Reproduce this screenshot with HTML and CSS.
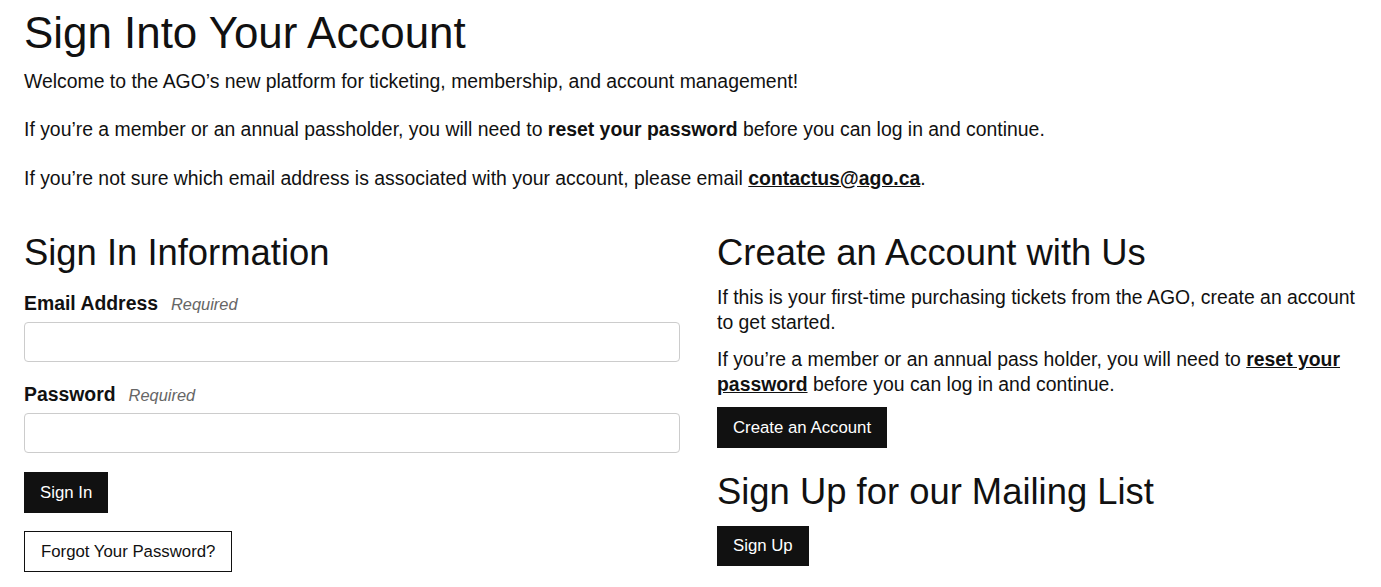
FILE: index.html
```html
<!DOCTYPE html>
<html lang="en">
<head>
<meta charset="utf-8">
<title>Sign Into Your Account</title>
<link rel="stylesheet" href="styles.css">
</head>
<body>
<main class="page">
  <h1 class="title">Sign Into Your Account</h1>
  <section class="intro">
    <p>Welcome to the AGO’s new platform for ticketing, membership, and account management!</p>
    <p>If you’re a member or an annual passholder, you will need to <strong>reset your password</strong> before you can log in and continue.</p>
    <p>If you’re not sure which email address is associated with your account, please email <a class="link" href="#">contactus@ago.ca</a>.</p>
  </section>
  <div class="columns">
    <section class="col">
      <h2 class="heading">Sign In Information</h2>
      <form class="form">
        <div class="field">
          <label class="label" for="email"><span class="label-text">Email Address</span><span class="req">Required</span></label>
          <input class="input" id="email" type="email">
        </div>
        <div class="field">
          <label class="label" for="pw"><span class="label-text">Password</span><span class="req">Required</span></label>
          <input class="input" id="pw" type="password">
        </div>
        <div class="actions">
          <button class="btn btn-dark" type="button">Sign In</button>
          <button class="btn btn-outline" type="button">Forgot Your Password?</button>
        </div>
      </form>
    </section>
    <section class="col">
      <h2 class="heading">Create an Account with Us</h2>
      <p class="text">If this is your first-time purchasing tickets from the AGO, create an account to get started.</p>
      <p class="text text-last">If you’re a member or an annual pass holder, you will need to <a class="link" href="#">reset your password</a> before you can log in and continue.</p>
      <button class="btn btn-dark" type="button">Create an Account</button>
      <h2 class="heading heading-sub">Sign Up for our Mailing List</h2>
      <button class="btn btn-dark" type="button">Sign Up</button>
    </section>
  </div>
</main>
</body>
</html>
```

FILE: styles.css
```css
* { box-sizing: border-box; }

html, body {
  margin: 0;
  padding: 0;
  background: #fff;
}

body {
  font-family: "Liberation Sans", Arial, sans-serif;
  color: #111;
  font-size: 19.4px;
  line-height: 24.4px;
}

.page {
  padding: 8px 14px 0 24px;
}

.title {
  font-size: 43.9px;
  font-weight: 400;
  line-height: 49.7px;
  margin: 0 0 11px 0;
}

.intro p {
  margin: 0 0 24px 0;
}

.intro p:last-child {
  margin-bottom: 0;
}

.intro strong { font-weight: 700; }

.link {
  color: #111;
  font-weight: 700;
  text-decoration: underline;
}

.columns {
  display: grid;
  grid-template-columns: 656px 1fr;
  column-gap: 37px;
  margin-top: 42px;
  align-items: start;
}

.col {
  display: flex;
  flex-direction: column;
  align-items: flex-start;
}

.heading {
  font-size: 36.4px;
  font-weight: 400;
  line-height: 41.4px;
  margin: 0 0 12px 0;
}

.heading-sub {
  margin-top: 23px;
  margin-bottom: 13.5px;
}

.form {
  width: 100%;
}

.field {
  margin-top: 6px;
}

.field + .field {
  margin-top: 20px;
}

.label {
  display: block;
  margin-bottom: 5.6px;
}

.label-text {
  font-weight: 700;
}

.req {
  font-style: italic;
  font-size: 16.4px;
  color: #666;
  margin-left: 13px;
}

.input {
  display: block;
  width: 100%;
  height: 40px;
  border: 1px solid #ccc;
  border-radius: 4px;
  background: #fff;
  font: inherit;
  padding: 0 10px;
  margin: 0;
}

.actions {
  display: flex;
  flex-direction: column;
  align-items: flex-start;
  gap: 18.3px;
  margin-top: 19px;
}

.text {
  margin: 0 0 13px 0;
}

.text-last {
  margin-bottom: 11px;
}

.btn {
  font-family: "Liberation Sans", Arial, sans-serif;
  font-size: 16.8px;
  line-height: 19.3px;
  padding: 10.7px 16px;
  margin: 0;
  border-radius: 0;
  cursor: pointer;
}

.btn-dark {
  background: #111;
  color: #fff;
  border: 0;
}

.btn-outline {
  background: #fff;
  color: #111;
  border: 1px solid #111;
  padding: 9.7px 16px;
}
```
